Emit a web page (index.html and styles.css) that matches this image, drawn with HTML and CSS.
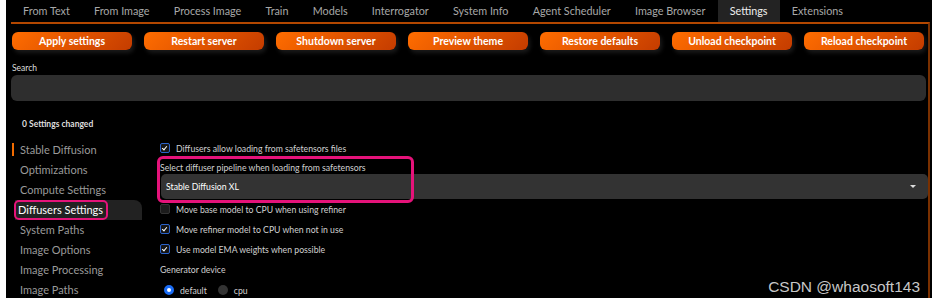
FILE: index.html
```html
<!DOCTYPE html>
<html lang="en">
<head>
    <meta charset="UTF-8">
    <title>Settings</title>
    <link rel="stylesheet" href="styles.css">
</head>
<body>
    <div class="app">
        <div class="tabs">
            <span class="tab">From Text</span>
            <span class="tab">From Image</span>
            <span class="tab">Process Image</span>
            <span class="tab">Train</span>
            <span class="tab">Models</span>
            <span class="tab">Interrogator</span>
            <span class="tab">System Info</span>
            <span class="tab">Agent Scheduler</span>
            <span class="tab">Image Browser</span>
            <span class="tab active">Settings</span>
            <span class="tab">Extensions</span>
        </div>
        <div class="panel">
            <div class="actions">
                <button>Apply settings</button>
                <button>Restart server</button>
                <button>Shutdown server</button>
                <button>Preview theme</button>
                <button>Restore defaults</button>
                <button>Unload checkpoint</button>
                <button>Reload checkpoint</button>
            </div>
            <label class="search-label">Search</label>
            <div class="search"></div>
            <p class="changed">0 Settings changed</p>
            <div class="body">
                <ul class="menu">
                    <li class="current">Stable Diffusion</li>
                    <li>Optimizations</li>
                    <li>Compute Settings</li>
                    <li class="selected"><span class="mark">Diffusers Settings</span></li>
                    <li>System Paths</li>
                    <li>Image Options</li>
                    <li>Image Processing</li>
                    <li>Image Paths</li>
                </ul>
                <div class="options">
                    <div class="check"><span class="box on"></span>Diffusers allow loading from safetensors files</div>
                    <div class="pipeline">
                        <div class="field-label">Select diffuser pipeline when loading from safetensors</div>
                        <div class="select">Stable Diffusion XL<span class="arrow"></span></div>
                        <div class="highlight"></div>
                    </div>
                    <div class="check"><span class="box"></span>Move base model to CPU when using refiner</div>
                    <div class="check"><span class="box on"></span>Move refiner model to CPU when not in use</div>
                    <div class="check"><span class="box on"></span>Use model EMA weights when possible</div>
                    <div class="field-label gen">Generator device</div>
                    <div class="radios">
                        <span class="radio on"></span>default
                        <span class="radio"></span>cpu
                    </div>
                </div>
            </div>
        </div>
        <div class="watermark">CSDN @whaosoft143</div>
    </div>
</body>
</html>
```

FILE: styles.css
```css
body {
    margin: 0;
    background: #fff;
    font-family: Lato, "Noto Sans", sans-serif;
}
.app {
    position: relative;
    margin-left: 6px;
    width: 926px;
    height: 298px;
    background: #000;
    overflow: hidden;
}
.tabs {
    display: flex;
    height: 22px;
    padding-left: 5px;
}
.tab {
    padding: 0 12.1px;
    line-height: 21px;
    font-size: 10.8px;
    color: #a8a8a8;
}
.tab.active {
    background: #232323;
    color: #eee;
}
.panel {
    margin-left: 5px;
    width: 917px;
    height: 280px;
    border-top: 2px solid #b34700;
    border-right: 2px solid #7a3000;
}
.actions {
    display: flex;
    gap: 12px;
    padding: 8px 0 0 1px;
}
button {
    width: 120px;
    height: 18px;
    border: none;
    border-radius: 6px;
    background: linear-gradient(135deg, #ff6d00, #c43c00);
    color: #fff;
    font-family: Lato, "Noto Sans", sans-serif;
    font-weight: bold;
    font-size: 10.5px;
    box-shadow: 2px 3px 4px #1a1a1a;
}
.search-label {
    display: block;
    margin: 13px 0 0 1px;
    font-size: 8.5px;
    color: #ddd;
}
.search {
    height: 26px;
    margin-top: 2px;
    width: 915px;
    border-radius: 6px;
    background: #2e2e2e;
}
.changed {
    margin: 18px 0 0 11px;
    font-size: 8.5px;
    font-weight: bold;
    color: #ddd;
}
.body {
    display: flex;
    margin-top: 11px;
}
.menu {
    list-style: none;
    margin: 0;
    padding: 0;
    width: 127px;
    margin-left: 4px;
}
.menu li {
    height: 20px;
    line-height: 20px;
    padding-left: 5px;
    font-size: 11px;
    color: #9a9a9a;
}
.menu li.current {
    border-left: 2px solid #f26b00;
    height: 13px;
    line-height: 13px;
    margin: 3px 0 4px -3px;
    padding-left: 6px;
}
.menu li.selected {
    background: #222;
    border-radius: 0 8px 0 0;
    padding-left: 0;
    color: #fff;
}
.mark {
    display: inline-block;
    height: 16px;
    line-height: 16px;
    padding: 0 3px 0 2px;
    border: 2px solid #e5137a;
    border-radius: 5px;
    margin-left: -1px;
}
.options {
    flex: 1;
    margin: -2px 0 0 18px;
    font-size: 8.7px;
    color: #d0d0d0;
}
.check {
    display: flex;
    align-items: center;
    height: 20px;
}
.box {
    width: 8px;
    height: 8px;
    margin: 0 6px 0 0;
    border: 1.5px solid #333;
    border-radius: 2px;
    background: #1c1c1c;
}
.box.on {
    border-color: #2a62c9;
    background: #151515;
    position: relative;
}
.box.on::after {
    content: "";
    position: absolute;
    left: 2px;
    top: 0.5px;
    width: 2px;
    height: 4px;
    border: solid #fff;
    border-width: 0 1.5px 1.5px 0;
    transform: rotate(40deg);
}
.pipeline {
    position: relative;
    padding-top: 2px;
}
.field-label {
    height: 13px;
    line-height: 13px;
}
.pipeline .field-label {
    margin-top: 1px;
}
.select {
    display: flex;
    align-items: center;
    height: 25px;
    margin-left: 1px;
    padding-left: 5px;
    border-radius: 5px;
    background: #333;
    color: #fff;
    position: relative;
}
.arrow {
    position: absolute;
    right: 12px;
    top: 11px;
    border: 3px solid transparent;
    border-top: 3px solid #ddd;
}
.highlight {
    position: absolute;
    left: -3px;
    top: -2px;
    width: 251px;
    height: 41px;
    border: 3px solid #e5137a;
    border-radius: 6px;
}
.gen {
    margin-top: 4px;
}
.radios {
    display: flex;
    align-items: center;
    height: 22px;
    margin-top: 3px;
    margin-left: 4px;
}
.radio {
    width: 10px;
    height: 10px;
    margin-right: 6px;
    margin-left: 11px;
    border-radius: 50%;
    background: #333;
}
.radio.on {
    width: 4px;
    height: 4px;
    margin-left: 0;
    border: 3px solid #1a6cf5;
    background: #fff;
}
.watermark {
    position: absolute;
    right: 12px;
    bottom: 2px;
    font-family: "Liberation Sans", Arial, sans-serif;
    font-size: 15.5px;
    color: #c8c8c8;
}
```
